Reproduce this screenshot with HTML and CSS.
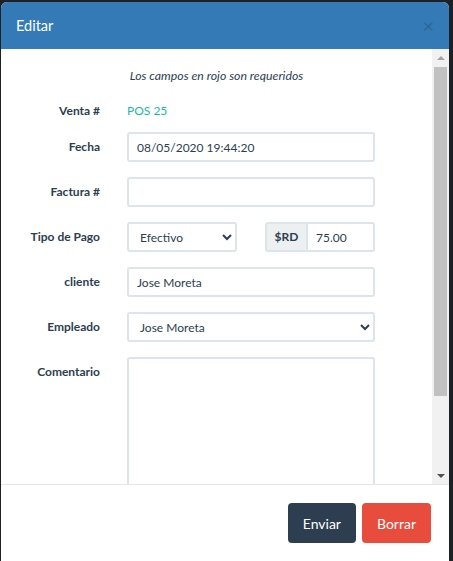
FILE: index.html
```html
<!DOCTYPE html>
<html lang="es">
<head>
  <meta charset="UTF-8">
  <meta name="viewport" content="width=device-width, initial-scale=1.0">
  <title>Editar venta</title>
  <link rel="stylesheet" href="styles.css">
</head>
<body>
  <div class="modal">
    <div class="modal-header">
      <h4>Editar</h4>
      <span class="close">&times;</span>
    </div>
    <div class="modal-scroll">
      <div class="modal-body">
        <p class="hint">Los campos en rojo son requeridos</p>
        <div class="form-row static">
          <label>Venta #</label>
          <span class="sale-no">POS 25</span>
        </div>
        <div class="form-row">
          <label for="fecha">Fecha</label>
          <input type="text" id="fecha" value="08/05/2020 19:44:20">
        </div>
        <div class="form-row">
          <label for="factura">Factura #</label>
          <input type="text" id="factura" value="">
        </div>
        <div class="form-row">
          <label for="tipo-pago">Tipo de Pago</label>
          <div class="pay-line">
            <select id="tipo-pago" class="short">
              <option>Efectivo</option>
              <option>Tarjeta</option>
              <option>Cheque</option>
            </select>
            <div class="input-group">
              <span class="addon">$RD</span>
              <input type="text" id="monto" value="75.00">
            </div>
          </div>
        </div>
        <div class="form-row">
          <label for="cliente">cliente</label>
          <input type="text" id="cliente" value="Jose Moreta">
        </div>
        <div class="form-row">
          <label for="empleado">Empleado</label>
          <select id="empleado">
            <option>Jose Moreta</option>
          </select>
        </div>
        <div class="form-row">
          <label for="comentario">Comentario</label>
          <textarea id="comentario"></textarea>
        </div>
      </div>
      <!-- scrollbar for the body panel -->
      <div class="scrollbar">
        <span class="arrow up"></span>
        <div class="track"><div class="thumb"></div></div>
        <span class="arrow down"></span>
      </div>
    </div>
    <div class="modal-footer">
      <button class="btn btn-primary">Enviar</button>
      <button class="btn btn-danger">Borrar</button>
    </div>
  </div>
</body>
</html>
```

FILE: styles.css
```css
body {
  margin: 0;
  padding: 2px 4px 0 1px;
  height: 561px;
  box-sizing: border-box;
  overflow: hidden;
  background-color: #1d2125;
  font-family: Lato, "Open Sans", sans-serif;
  font-size: 12px;
  color: #2c3e50;
}

.modal {
  width: 448px;
  height: 570px;
  background-color: #fff;
  border-radius: 6px;
  overflow: hidden;
}

.modal-header {
  height: 47px;
  box-sizing: border-box;
  background-color: #337ab7;
  color: #fff;
  display: flex;
  align-items: center;
  justify-content: space-between;
  padding: 0 15px;
}

.modal-header h4 {
  margin: 0;
  font-size: 14.5px;
  font-weight: 400;
}

.close {
  font-size: 20px;
  line-height: 1;
  color: #2d6699;
  margin-top: -2px;
}

.modal-scroll {
  display: flex;
  height: 435px;
  overflow: hidden;
}

.modal-body {
  flex: 1;
  padding: 17px 15px 15px;
}

.scrollbar {
  width: 17px;
  display: flex;
  flex-direction: column;
  align-items: center;
  background-color: #f1f1f1;
}

.arrow {
  height: 17px;
  width: 17px;
  display: flex;
  align-items: center;
  justify-content: center;
}

.arrow::before {
  content: "";
  border-left: 4px solid transparent;
  border-right: 4px solid transparent;
}

.arrow.up::before {
  border-bottom: 4px solid #a3a3a3;
}

.arrow.down::before {
  border-top: 4px solid #505050;
}

.track {
  flex: 1;
  width: 100%;
  display: flex;
  justify-content: center;
}

.thumb {
  width: 13px;
  height: 329px;
  margin-top: 1px;
  background-color: #c1c1c1;
}

.hint {
  margin: 0 0 15px;
  line-height: 20px;
  text-align: center;
  font-style: italic;
  font-size: 12.3px;
}

.form-row {
  display: grid;
  grid-template-columns: 84px 248px;
  column-gap: 27px;
  margin-bottom: 15px;
}

.form-row.static {
  margin-bottom: 11px;
}

.form-row label {
  text-align: right;
  font-weight: 700;
  line-height: 30px;
}

.form-row.static label,
.sale-no {
  line-height: 20px;
}

.sale-no {
  color: #18bc9c;
}

input,
select,
textarea {
  font-family: inherit;
  font-size: 12px;
  color: #2c3e50;
  height: 30px;
  box-sizing: border-box;
  border: 2px solid #dce4ec;
  border-radius: 3px;
  background-color: #fff;
  padding: 0 8px;
  outline: none;
  width: 100%;
}

select {
  padding: 0 8px 0 7px;
}

textarea {
  height: 180px;
  resize: none;
}

.pay-line {
  display: flex;
  gap: 28px;
}

select.short {
  width: 110px;
}

.input-group {
  display: flex;
  width: 110px;
}

.addon {
  width: 41px;
  box-sizing: border-box;
  height: 30px;
  line-height: 26px;
  text-align: center;
  font-weight: 700;
  background-color: #ecf0f1;
  border: 2px solid #dce4ec;
  border-right: none;
  border-radius: 3px 0 0 3px;
}

.input-group input {
  flex: 1;
  border-radius: 0 3px 3px 0;
}

.modal-footer {
  border-top: 1px solid #e5e5e5;
  padding: 18px 18px 0;
  display: flex;
  justify-content: flex-end;
  gap: 6px;
}

.btn {
  height: 40px;
  padding: 0 15px;
  border: none;
  border-radius: 4px;
  font-family: inherit;
  font-size: 14px;
  color: #fff;
  cursor: pointer;
}

.btn-primary {
  background-color: #2c3e50;
}

.btn-danger {
  background-color: #e74c3c;
}
```
